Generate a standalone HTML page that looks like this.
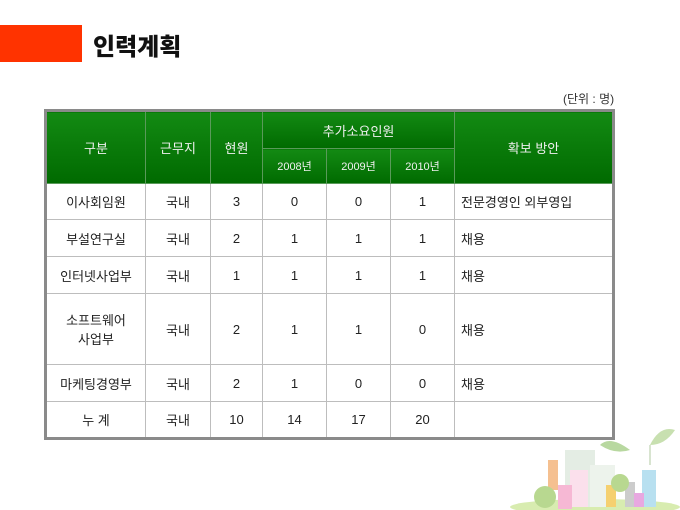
<!DOCTYPE html>
<html><head><meta charset="utf-8"><style>
body{margin:0;width:680px;height:510px;background:#fff;position:relative;overflow:hidden;font-family:"Liberation Sans","Noto Sans CJK KR",sans-serif;}
.bar{position:absolute;left:0;top:25px;width:82px;height:37px;background:#ff3300;}
.title{position:absolute;left:93px;top:27px;font-size:24px;font-weight:900;color:#111;font-family:"Noto Sans CJK KR",sans-serif;letter-spacing:0px}
.unit{position:absolute;left:563px;top:90px;font-size:12px;color:#333}
table{position:absolute;left:44px;top:109px;border-collapse:collapse;table-layout:fixed;width:568px;border:3px solid #8a8a8a;font-size:13px;color:#222}
td{border:1px solid #bdbdbd;text-align:center;padding:0;}
th{background:linear-gradient(#138a13,#006a00);color:#f0f0f0;font-weight:normal;border:1px solid #5a9a5a;font-size:13px;padding:0}
th.s{font-size:11px}
td.l{text-align:left;padding-left:6px}
</style></head><body>
<div class="bar"></div>
<div class="title">인력계획</div>
<div class="unit">(단위 : 명)</div>
<table>
<colgroup><col style="width:100px"><col style="width:65px"><col style="width:52px"><col style="width:64px"><col style="width:64px"><col style="width:64px"><col style="width:159px"></colgroup>
<tr style="height:38px"><th rowspan="2">구분</th><th rowspan="2">근무지</th><th rowspan="2">현원</th><th colspan="3">추가소요인원</th><th rowspan="2">확보 방안</th></tr>
<tr style="height:35px"><th class="s">2008년</th><th class="s">2009년</th><th class="s">2010년</th></tr>
<tr style="height:36px"><td>이사회임원</td><td>국내</td><td>3</td><td>0</td><td>0</td><td>1</td><td class="l">전문경영인 외부영입</td></tr>
<tr style="height:37px"><td>부설연구실</td><td>국내</td><td>2</td><td>1</td><td>1</td><td>1</td><td class="l">채용</td></tr>
<tr style="height:37px"><td>인터넷사업부</td><td>국내</td><td>1</td><td>1</td><td>1</td><td>1</td><td class="l">채용</td></tr>
<tr style="height:71px"><td>소프트웨어<br>사업부</td><td>국내</td><td>2</td><td>1</td><td>1</td><td>0</td><td class="l">채용</td></tr>
<tr style="height:37px"><td>마케팅경영부</td><td>국내</td><td>2</td><td>1</td><td>0</td><td>0</td><td class="l">채용</td></tr>
<tr style="height:37px"><td>누 계</td><td>국내</td><td>10</td><td>14</td><td>17</td><td>20</td><td></td></tr>
</table>
<svg style="position:absolute;left:500px;top:425px" width="180" height="85">
<ellipse cx="95" cy="82" rx="85" ry="8" fill="#d8ecb0"/>
<path d="M130 25 q-20 -15 -30 -5 q15 10 30 5z" fill="#b8d8a0"/>
<path d="M150 20 q10 -20 25 -15 q-10 15 -25 15z" fill="#c8e0b0"/>
<line x1="150" y1="20" x2="150" y2="40" stroke="#b0c8a0"/>
<rect x="65" y="25" width="30" height="57" fill="#e4ede4"/>
<rect x="90" y="40" width="25" height="42" fill="#edf3ec"/>
<rect x="48" y="35" width="10" height="30" fill="#f5c090"/>
<rect x="70" y="45" width="18" height="37" fill="#fbe0ec"/>
<rect x="58" y="60" width="14" height="24" fill="#f6b8d4"/>
<rect x="142" y="45" width="14" height="37" fill="#b8e0f0"/>
<rect x="106" y="60" width="10" height="22" fill="#f5d070"/>
<rect x="125" y="57" width="10" height="25" fill="#ccc"/>
<rect x="134" y="68" width="10" height="14" fill="#e8a8e0"/>
<circle cx="45" cy="72" r="11" fill="#b8d890"/>
<circle cx="120" cy="58" r="9" fill="#b8d890"/>
</svg>
</body></html>
